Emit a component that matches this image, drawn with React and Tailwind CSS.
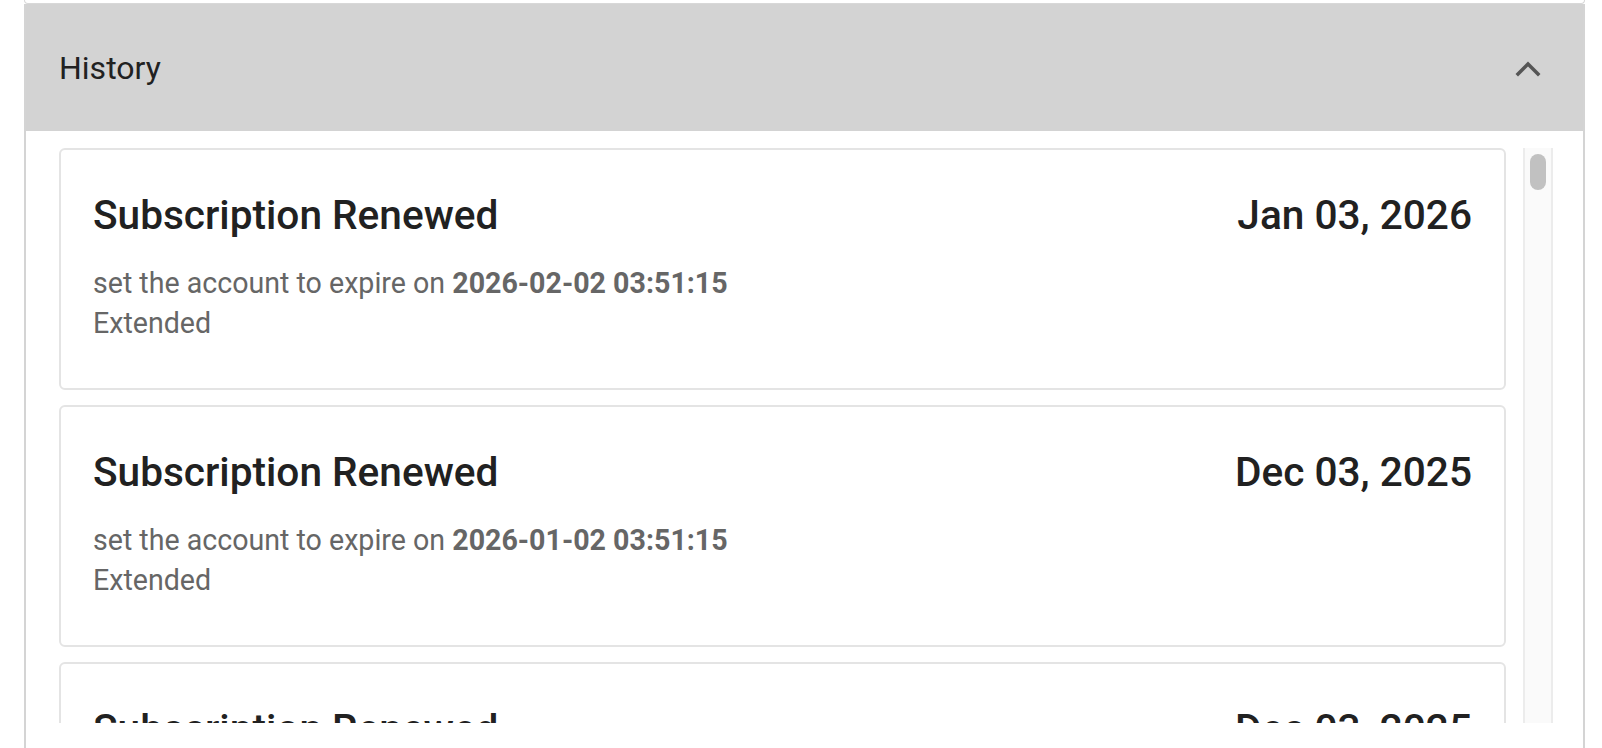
const entries = [
  { date: "Jan 03, 2026", expires: "2026-02-02 03:51:15" },
  { date: "Dec 03, 2025", expires: "2026-01-02 03:51:15" },
  { date: "Dec 03, 2025", expires: "2025-12-02 03:51:15" },
];

function ChevronUp() {
  return (
    <svg width="26" height="18" viewBox="0 0 26 18" fill="none">
      <path d="M3 15 L13 5 L23 15" stroke="#555555" strokeWidth="3.5" strokeLinecap="square" />
    </svg>
  );
}

function HistoryCard({ date, expires }) {
  return (
    <div className="shrink-0 h-[242px] rounded-[6px] border-2 border-[#e4e4e4] bg-white px-[32px] pt-[41px]">
      <div className="flex items-start justify-between text-[40.6px] leading-[48px] font-medium text-[#212121]">
        <span>Subscription Renewed</span>
        <span>{date}</span>
      </div>
      <div className="mt-[24px] text-[28.6px] leading-[40px] text-[#666666]">
        <p>
          set the account to expire on <span className="font-bold">{expires}</span>
        </p>
        <p>Extended</p>
      </div>
    </div>
  );
}

export default function App() {
  return (
    <div className="h-[748px] w-full overflow-hidden bg-white pl-[24px] pr-[17px] font-['Roboto',sans-serif]">
      <div className="h-[4px] rounded-b-[5px] border-x border-b border-[#d8d8d8]" />
      <div className="border-x-2 border-[#d4d4d4] pb-[40px]">
        <div className="flex h-[127px] items-center justify-between bg-[#d3d3d3] pl-[33px] pr-[42px]">
          <span className="text-[32px] text-[#212121]">History</span>
          <ChevronUp />
        </div>
        <div className="flex h-[592px] gap-[17px] pt-[17px] pl-[33px] pr-[30px]">
          <div className="flex flex-1 flex-col gap-[15px] overflow-hidden">
            {entries.map((e, i) => (
              <HistoryCard key={i} date={e.date} expires={e.expires} />
            ))}
          </div>
          <div className="w-[30px] border-x-2 border-[#ececec] bg-[#fafafa] pt-[6px]">
            <div className="mx-auto h-[36px] w-[16px] rounded-full bg-[#c1c1c1]" />
          </div>
        </div>
      </div>
    </div>
  );
}
